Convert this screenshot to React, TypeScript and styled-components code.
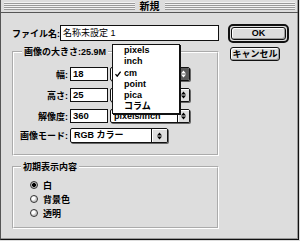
import styled, { createGlobalStyle } from "styled-components";

const GlobalStyle = createGlobalStyle`
  html, body {
    margin: 0;
    padding: 0;
    background: #dddddd;
  }
  body {
    font-family: "Liberation Sans", "Noto Sans CJK JP", sans-serif;
    font-size: 9px;
    color: #000;
  }
`;

const Window = styled.div`
  width: 299px;
  height: 240px;
  box-sizing: border-box;
  background: #dddddd;
  border-left: 1px solid #555;
  border-right: 1px solid #111;
  border-bottom: 1px solid #111;
  box-shadow: inset -1px -1px 0 #999;
  display: flex;
  flex-direction: column;
`;

const TitleBar = styled.div`
  height: 13px;
  box-sizing: border-box;
  padding: 2px 3px;
  border-bottom: 1px solid #555;
  display: flex;
  align-items: center;
`;

const Stripes = styled.div`
  flex: 1;
  height: 8px;
  background: repeating-linear-gradient(to bottom, #f2f2f2 0 1px, #9a9a9a 1px 2px);
`;

const Title = styled.span`
  padding: 0 5px;
  font-weight: bold;
  font-size: 10px;
  line-height: 11px;
`;

const Body = styled.div`
  display: flex;
  padding: 12px 0 0 11px;
`;

const MainColumn = styled.div`
  width: 207px;
  display: flex;
  flex-direction: column;
`;

const FileRow = styled.div`
  display: flex;
  align-items: center;
  height: 16px;
`;

const FileLabel = styled.span`
  width: 48px;
  font-weight: bold;
  white-space: nowrap;
`;

const TextField = styled.div<{ $w: number; $h: number }>`
  width: ${(p) => p.$w}px;
  height: ${(p) => p.$h}px;
  box-sizing: border-box;
  border: 1px solid #111;
  background: #fff;
  padding-left: 2px;
  line-height: ${(p) => p.$h - 2}px;
  white-space: nowrap;
  overflow: hidden;
`;

const Group = styled.fieldset<{ $top: number; $bottom: number }>`
  margin: ${(p) => p.$top}px 0 0 0;
  padding: 0 0 ${(p) => p.$bottom}px 0;
  border: 2px groove #ffffff;
  min-width: 0;
`;

const Legend = styled.legend<{ $left: number }>`
  margin-left: ${(p) => p.$left}px;
  padding: 0 2px;
  font-weight: bold;
  line-height: 12px;
  white-space: nowrap;
`;

const SizeRows = styled.div`
  display: flex;
  flex-direction: column;
  gap: 7px;
  padding-top: 9px;
`;

const FieldRow = styled.div<{ $h: number; $top?: number }>`
  display: flex;
  align-items: center;
  gap: 2px;
  height: ${(p) => p.$h}px;
  margin-top: ${(p) => p.$top ?? 0}px;
`;

const RowLabel = styled.span`
  width: 54px;
  text-align: right;
  font-weight: bold;
  white-space: nowrap;
`;

const ValueText = styled.span`
  font-weight: bold;
  font-size: 9.5px;
`;

const Popup = styled.div<{ $w: number; $h: number }>`
  position: relative;
  width: ${(p) => p.$w}px;
  height: ${(p) => p.$h}px;
  box-sizing: border-box;
  display: flex;
  border: 1px solid #111;
  border-radius: 2px;
  background: #fff;
  box-shadow: 1px 1px 0 #666;
`;

const PopupText = styled.span`
  flex: 1;
  padding-left: 3px;
  font-weight: bold;
  line-height: 12px;
  white-space: nowrap;
  overflow: hidden;
`;

const PopupArrow = styled.span<{ $open?: boolean; $w: number }>`
  width: ${(p) => p.$w}px;
  display: flex;
  align-items: center;
  justify-content: center;
  border-left: 1px solid #111;
  border-radius: 0 1px 1px 0;
  background: ${(p) => (p.$open ? "#5a5a5a" : "#dddddd")};
  box-shadow: ${(p) => (p.$open ? "none" : "inset 1px 1px 0 #fff")};
`;

const Menu = styled.div`
  position: absolute;
  left: 1px;
  top: -24px;
  z-index: 10;
  width: 68px;
  box-sizing: border-box;
  border: 1px solid #111;
  background: #fff;
  box-shadow: 1px 1px 0 #111;
`;

const MenuItem = styled.div`
  position: relative;
  height: 11.3px;
  line-height: 11.3px;
  padding-left: 11px;
  font-weight: bold;
  white-space: nowrap;
`;

const CheckMark = styled.svg`
  position: absolute;
  left: 2px;
  top: 3px;
`;

const RadioList = styled.div`
  display: flex;
  flex-direction: column;
  padding: 5px 0 0 16px;
`;

const RadioRow = styled.div`
  display: flex;
  align-items: center;
  gap: 5px;
  height: 14px;
`;

const RadioDot = styled.span<{ $checked?: boolean }>`
  width: 8px;
  height: 8px;
  box-sizing: border-box;
  border-radius: 50%;
  border: 1px solid #333;
  background: ${(p) =>
    p.$checked
      ? "radial-gradient(circle, #000 0 1.8px, #bbb 2.2px)"
      : "radial-gradient(circle at 35% 35%, #fff 0 1.5px, #ccc 3px)"};
`;

const RadioText = styled.span`
  font-weight: bold;
`;

const ButtonColumn = styled.div`
  margin: -1px 0 0 9px;
  display: flex;
  flex-direction: column;
  align-items: flex-start;
`;

const DefaultRing = styled.div`
  width: 61px;
  height: 19px;
  box-sizing: border-box;
  border: 2px solid #111;
  border-radius: 5px;
  padding: 1px;
`;

const PushButton = styled.div<{ $w?: number; $h: number }>`
  width: ${(p) => (p.$w ? `${p.$w}px` : "100%")};
  height: ${(p) => p.$h}px;
  box-sizing: border-box;
  border: 1px solid #111;
  border-radius: 3px;
  background: #dddddd;
  box-shadow: inset 1px 1px 0 #fff, inset -1px -1px 0 #999;
  display: flex;
  align-items: center;
  justify-content: center;
  font-weight: bold;
  line-height: 1;
`;

const CancelButton = styled(PushButton)`
  margin: 4px 0 0 2px;
`;

function UpDown({ color }: { color: string }) {
  return (
    <svg width="5" height="8" viewBox="0 0 5 8">
      <path d="M0 3.4 L2.5 0.4 L5 3.4Z M0 4.6 L2.5 7.6 L5 4.6Z" fill={color} />
    </svg>
  );
}

const units = ["pixels", "inch", "cm", "point", "pica", "コラム"];

// the open menu hides the first two popups' labels, so only the third shows its unit
const sizeRows = [
  { label: "幅:", value: "18", unit: "", selected: "cm", open: true },
  { label: "高さ:", value: "25", unit: "", selected: "cm", open: false },
  { label: "解像度:", value: "360", unit: "pixels/inch", selected: "pixels/inch", open: false },
];

const fillOptions = [
  { label: "白", checked: true },
  { label: "背景色", checked: false },
  { label: "透明", checked: false },
];

export default function App() {
  return (
    <>
      <GlobalStyle />
      <Window>
        <TitleBar>
          <Stripes />
          <Title>新規</Title>
          <Stripes />
        </TitleBar>
        <Body>
          <MainColumn>
            <FileRow>
              <FileLabel>ファイル名:</FileLabel>
              <TextField $w={159} $h={16}>
                名称未設定 1
              </TextField>
            </FileRow>

            <Group $top={5} $bottom={11}>
              <Legend $left={8}>画像の大きさ:25.9M</Legend>
              <SizeRows>
                {sizeRows.map((row) => (
                  <FieldRow key={row.label} $h={14}>
                    <RowLabel>{row.label}</RowLabel>
                    <TextField $w={38} $h={14}>
                      <ValueText>{row.value}</ValueText>
                    </TextField>
                    <Popup $w={80} $h={14}>
                      <PopupText>{row.unit}</PopupText>
                      <PopupArrow $w={11} $open={row.open}>
                        <UpDown color={row.open ? "#fff" : "#000"} />
                      </PopupArrow>
                      {row.open && (
                        <Menu>
                          {units.map((u) => (
                            <MenuItem key={u}>
                              {u === row.selected && (
                                <CheckMark width="6" height="6" viewBox="0 0 6 6">
                                  <polyline
                                    points="0.5,3.2 2.2,5.2 5.6,0.6"
                                    fill="none"
                                    stroke="#000"
                                    strokeWidth="1.3"
                                  />
                                </CheckMark>
                              )}
                              {u}
                            </MenuItem>
                          ))}
                        </Menu>
                      )}
                    </Popup>
                  </FieldRow>
                ))}
              </SizeRows>
              <FieldRow $h={15} $top={5}>
                <RowLabel>画像モード:</RowLabel>
                <Popup $w={98} $h={15}>
                  <PopupText>RGB カラー</PopupText>
                  <PopupArrow $w={15}>
                    <UpDown color="#000" />
                  </PopupArrow>
                </Popup>
              </FieldRow>
            </Group>

            <Group $top={5} $bottom={7}>
              <Legend $left={7}>初期表示内容</Legend>
              <RadioList>
                {fillOptions.map((o) => (
                  <RadioRow key={o.label}>
                    <RadioDot $checked={o.checked} />
                    <RadioText>{o.label}</RadioText>
                  </RadioRow>
                ))}
              </RadioList>
            </Group>
          </MainColumn>

          <ButtonColumn>
            <DefaultRing>
              <PushButton $h={13}>OK</PushButton>
            </DefaultRing>
            <CancelButton $w={50} $h={14}>
              キャンセル
            </CancelButton>
          </ButtonColumn>
        </Body>
      </Window>
    </>
  );
}
